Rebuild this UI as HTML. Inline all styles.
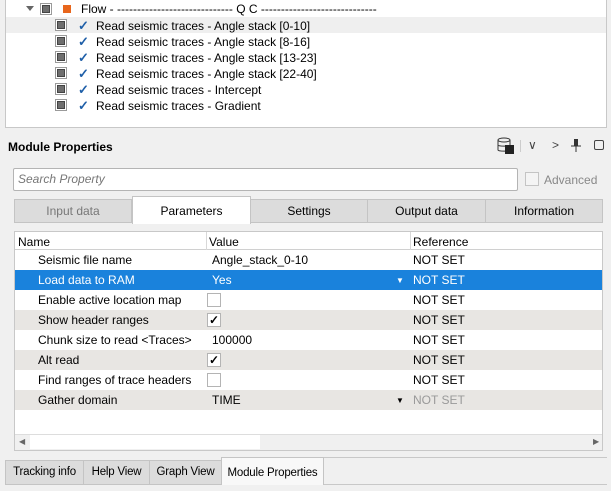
<!DOCTYPE html>
<html><head><style>
*{margin:0;padding:0;box-sizing:border-box}
body{width:611px;height:491px;background:#f0f0f0;font-family:"Liberation Sans",sans-serif;font-size:12px;color:#000;position:relative;overflow:hidden}
.a{position:absolute;white-space:nowrap}
.cb{position:absolute;width:12px;height:12px;border:1px solid #9a9a9a;background:#fff}
.cb i{position:absolute;left:1px;top:1px;width:8px;height:8px;background:#6e6e6e;border:1px solid #444}
.chk{position:absolute;color:#1f5fa8;font-size:13px;font-weight:bold}
.tab{position:absolute;top:199px;height:24px;background:#dcdcdc;border:1px solid #c4c4c4;text-align:center;line-height:22px;font-size:12px}
.row{position:absolute;left:15px;width:587px;height:20px;line-height:21px}
.g{background:#e8e6e3}
.n{position:absolute;left:23px}
.v{position:absolute;left:197px}
.r{position:absolute;left:398px}
.vcb{position:absolute;left:192px;top:3px;width:14px;height:14px;border:1px solid #b4b4b4;background:#fff;font-size:12px;line-height:12px;text-align:center;font-weight:bold}
.bt{position:absolute;top:460px;height:25px;background:#dcdcdc;border:1px solid #c4c4c4;line-height:23px;text-align:center;font-size:11.5px;letter-spacing:-0.2px}
</style></head><body>
<div class="a" style="left:5px;top:0;width:602px;height:128px;background:#fff;border:1px solid #c8c8c8;border-top:none"></div>
<div class="a" style="left:6px;top:17px;width:600px;height:16px;background:#efefef"></div>
<div class="a" style="left:26px;top:6px;width:0;height:0;border-left:4px solid transparent;border-right:4px solid transparent;border-top:5px solid #666"></div>
<div class="cb" style="left:40px;top:3px"><i></i></div>
<div class="a" style="left:63px;top:5px;width:8px;height:8px;background:#e8661c"></div>
<div class="a" style="left:81px;top:2px">Flow - ----------------------------- Q C -----------------------------</div>
<div class="cb" style="left:55px;top:19px"><i></i></div><div class="chk" style="left:78px;top:18px">✓</div><div class="a" style="left:96px;top:19px">Read seismic traces - Angle stack [0-10]</div>
<div class="cb" style="left:55px;top:35px"><i></i></div><div class="chk" style="left:78px;top:34px">✓</div><div class="a" style="left:96px;top:35px">Read seismic traces - Angle stack [8-16]</div>
<div class="cb" style="left:55px;top:51px"><i></i></div><div class="chk" style="left:78px;top:50px">✓</div><div class="a" style="left:96px;top:51px">Read seismic traces - Angle stack [13-23]</div>
<div class="cb" style="left:55px;top:67px"><i></i></div><div class="chk" style="left:78px;top:66px">✓</div><div class="a" style="left:96px;top:67px">Read seismic traces - Angle stack [22-40]</div>
<div class="cb" style="left:55px;top:83px"><i></i></div><div class="chk" style="left:78px;top:82px">✓</div><div class="a" style="left:96px;top:83px">Read seismic traces - Intercept</div>
<div class="cb" style="left:55px;top:99px"><i></i></div><div class="chk" style="left:78px;top:98px">✓</div><div class="a" style="left:96px;top:99px">Read seismic traces - Gradient</div>

<div class="a" style="left:8px;top:140px;font-weight:bold;font-size:12px">Module Properties</div>
<svg class="a" style="left:497px;top:137px" width="18" height="18"><ellipse cx="7" cy="3" rx="6" ry="2" fill="none" stroke="#333"/><path d="M1 3v10c0 1.5 12 1.5 12 0V3M1 8c0 1.5 12 1.5 12 0" fill="none" stroke="#333"/><rect x="8" y="8" width="9" height="9" fill="#222"/></svg>
<div class="a" style="left:520px;top:140px;width:1px;height:12px;background:#ccc"></div>
<div class="a" style="left:528px;top:138px;color:#444">∨</div>
<div class="a" style="left:552px;top:138px;color:#444">&gt;</div>
<svg class="a" style="left:571px;top:139px" width="10" height="14"><rect x="3" y="0" width="4" height="7" fill="#333"/><path d="M0 7h10M5 7v6" stroke="#333"/></svg>
<div class="a" style="left:594px;top:140px;width:10px;height:10px;border:1px solid #444;border-radius:2px"></div>

<div class="a" style="left:13px;top:168px;width:505px;height:23px;background:#fff;border:1px solid #b4b4b4;border-radius:2px;padding-left:4px;line-height:21px;color:#777;font-style:italic">Search Property</div>
<div class="a" style="left:525px;top:172px;width:14px;height:14px;border:1px solid #c4c4c4;background:#f4f4f4"></div>
<div class="a" style="left:544px;top:173px;color:#888">Advanced</div>

<div class="tab" style="left:14px;width:118px;color:#777">Input data</div>
<div class="tab" style="left:250px;width:118px">Settings</div>
<div class="tab" style="left:367px;width:119px">Output data</div>
<div class="tab" style="left:485px;width:118px">Information</div>
<div class="tab" style="left:132px;top:196px;width:119px;height:28px;background:#fff;border-bottom:none;line-height:28px">Parameters</div>

<div class="a" style="left:14px;top:231px;width:589px;height:220px;background:#fff;border:1px solid #c8c8c8"></div>
<div class="a" style="left:15px;top:232px;width:587px;height:18px;border-bottom:1px solid #d0d0d0;background:#fff"></div>
<div class="a" style="left:206px;top:232px;width:1px;height:18px;background:#d8d8d8"></div>
<div class="a" style="left:410px;top:232px;width:1px;height:18px;background:#d8d8d8"></div>
<div class="a" style="left:18px;top:235px">Name</div>
<div class="a" style="left:209px;top:235px">Value</div>
<div class="a" style="left:413px;top:235px">Reference</div>

<div class="row" style="top:250px"><span class="n">Seismic file name</span><span class="v">Angle_stack_0-10</span><span class="r">NOT SET</span></div>
<div class="row" style="top:270px;background:#1a82dc;color:#fff"><span class="n">Load data to RAM</span><span class="v">Yes</span><span class="a" style="left:381px;top:0;font-size:8px">▼</span><span class="r">NOT SET</span></div>
<div class="row" style="top:290px"><span class="n">Enable active location map</span><span class="vcb"></span><span class="r">NOT SET</span></div>
<div class="row g" style="top:310px"><span class="n">Show header ranges</span><span class="vcb">✓</span><span class="r">NOT SET</span></div>
<div class="row" style="top:330px"><span class="n">Chunk size to read &lt;Traces&gt;</span><span class="v">100000</span><span class="r">NOT SET</span></div>
<div class="row g" style="top:350px"><span class="n">Alt read</span><span class="vcb">✓</span><span class="r">NOT SET</span></div>
<div class="row" style="top:370px"><span class="n">Find ranges of trace headers</span><span class="vcb"></span><span class="r">NOT SET</span></div>
<div class="row g" style="top:390px"><span class="n">Gather domain</span><span class="v">TIME</span><span class="a" style="left:381px;top:0;font-size:8px">▼</span><span class="r" style="color:#999">NOT SET</span></div>

<div class="a" style="left:15px;top:434px;width:587px;height:16px;background:#f0f0f0;border-top:1px solid #ddd"></div>
<div class="a" style="left:30px;top:435px;width:230px;height:14px;background:#fff"></div>
<div class="a" style="left:19px;top:437px;font-size:8px;color:#666">◀</div>
<div class="a" style="left:593px;top:437px;font-size:8px;color:#666">▶</div>

<div class="a" style="left:5px;top:484px;width:602px;height:1px;background:#c8c8c8"></div>
<div class="bt" style="left:5px;width:79px">Tracking info</div>
<div class="bt" style="left:83px;width:67px">Help View</div>
<div class="bt" style="left:149px;width:73px">Graph View</div>
<div class="bt" style="left:221px;top:457px;height:28px;width:103px;background:#f8f8f8;border-bottom:none;line-height:30px">Module Properties</div>
<div class="a" style="left:324px;top:457px;width:283px;height:1px;background:#c8c8c8"></div>
</body></html>
